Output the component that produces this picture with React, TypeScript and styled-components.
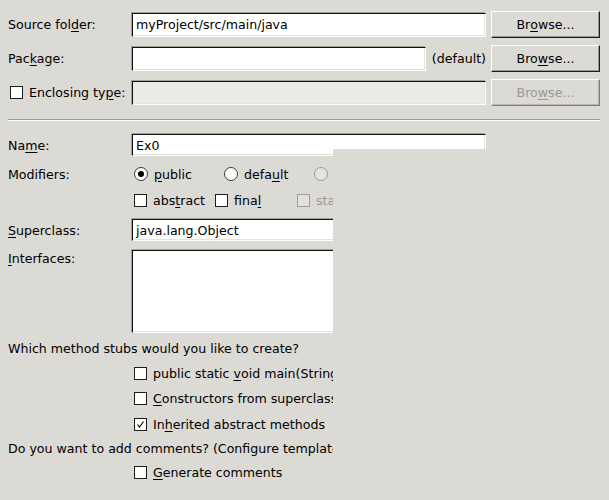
import React from "react";
import styled, { createGlobalStyle, css } from "styled-components";

const Global = createGlobalStyle`
  html, body { margin: 0; padding: 0; background: #dcdad5; }
  body { font-family: "DejaVu Sans", "Liberation Sans", sans-serif; font-size: 12.6px; color: #000; }
`;

const Page = styled.div`
  width: 609px;
  height: 500px;
  box-sizing: border-box;
  padding: 11px 9px 0 8px;
  background: #dcdad5;
  clip-path: polygon(0 0, 609px 0, 609px 149px, 333px 149px, 333px 500px, 0 500px);
`;

const TopGrid = styled.div`
  display: grid;
  grid-template-columns: 119px 354px 109px;
  column-gap: 5px;
  grid-auto-rows: 27px;
  row-gap: 7px;
  align-items: center;
`;

const Label = styled.div<{ $disabled?: boolean }>`
  white-space: nowrap;
  color: ${(p) => (p.$disabled ? "#9a9894" : "#000")};
`;

const Mn = styled.span`
  text-decoration: underline;
  text-underline-offset: 2px;
`;

const Field = styled.div<{ $disabled?: boolean; $h?: number }>`
  box-sizing: border-box;
  height: ${(p) => p.$h ?? 24}px;
  background: ${(p) => (p.$disabled ? "#eceae6" : "#fff")};
  border: 1px solid;
  border-color: #111 #fff #fff #111;
  box-shadow: inset -1px -1px 0 #e4e2de, -1px -1px 0 #a3a19c;
  padding: 0 3px;
  display: flex;
  align-items: center;
  white-space: nowrap;
  overflow: hidden;
  min-width: 0;
`;

const PackageCell = styled.div`
  display: flex;
  align-items: center;
  gap: 6px;
  & > ${Field} { flex: 1; }
`;

const Button = styled.div<{ $disabled?: boolean }>`
  box-sizing: border-box;
  height: 27px;
  display: flex;
  align-items: center;
  justify-content: center;
  background: #dcdad5;
  border: 1px solid;
  border-color: #fff #1c1c1c #1c1c1c #fff;
  box-shadow: inset -1px -1px 0 #9a9893;
  color: ${(p) => (p.$disabled ? "#9a9894" : "#000")};
  ${(p) =>
    p.$disabled &&
    css`
      border-color: #fff #7e7c78 #7e7c78 #fff;
      box-shadow: inset -1px -1px 0 #b8b6b1;
    `}
`;

const Check = styled.span<{ $disabled?: boolean }>`
  box-sizing: border-box;
  width: 13px;
  height: 13px;
  flex: none;
  border: 1px solid ${(p) => (p.$disabled ? "#a09e9a" : "#1e1e1e")};
  background: ${(p) => (p.$disabled ? "#e4e2de" : "#fff")};
  display: inline-flex;
  align-items: center;
  justify-content: center;
`;

const Radio = styled.span<{ $disabled?: boolean; $on?: boolean }>`
  box-sizing: border-box;
  width: 14px;
  height: 14px;
  flex: none;
  border-radius: 50%;
  border: 1px solid ${(p) => (p.$disabled ? "#9c9a96" : "#3a3a3a")};
  background: ${(p) => (p.$disabled ? "#e6e4e0" : "#fff")};
  display: inline-flex;
  align-items: center;
  justify-content: center;
  &::after {
    content: "";
    display: ${(p) => (p.$on ? "block" : "none")};
    width: 6px;
    height: 6px;
    border-radius: 50%;
    background: #000;
  }
`;

const Option = styled.label<{ $w?: number; $disabled?: boolean }>`
  display: inline-flex;
  align-items: center;
  gap: 6px;
  white-space: nowrap;
  width: ${(p) => (p.$w ? `${p.$w}px` : "auto")};
  flex: none;
  color: ${(p) => (p.$disabled ? "#9a9894" : "#000")};
`;

const EnclosingLabel = styled(Option)`
  padding-left: 2px;
`;

const Separator = styled.div`
  margin: 13px 0 13px 0;
  height: 1px;
  background: #9d9b97;
  border-bottom: 1px solid #fff;
`;

const FormRow = styled.div<{ $h: number; $mt?: number; $align?: string }>`
  display: grid;
  grid-template-columns: 124px 1fr;
  height: ${(p) => p.$h}px;
  margin-top: ${(p) => p.$mt ?? 0}px;
  align-items: ${(p) => p.$align ?? "center"};
`;

const NameField = styled(Field)`
  width: 354px;
`;

const WideField = styled(Field)`
  width: 420px;
`;

const Options = styled.div`
  display: flex;
  align-items: center;
  padding-left: 2px;
`;

const TopLabel = styled(Label)`
  padding-top: 1px;
`;

const Line = styled.div<{ $h: number; $mt?: number }>`
  height: ${(p) => p.$h}px;
  margin-top: ${(p) => p.$mt ?? 0}px;
  display: flex;
  align-items: center;
  white-space: nowrap;
`;

const Indented = styled(Line)`
  padding-left: 126px;
`;

const CheckMark = () => (
  <svg width="9" height="9" viewBox="0 0 9 9">
    <path d="M1.5 4.5 L3.5 7 L7.5 1.5" fill="none" stroke="#000" strokeWidth="1.1" />
  </svg>
);

export default function App() {
  return (
    <>
      <Global />
      <Page>
        <TopGrid>
          <Label>
            Source fol<Mn>d</Mn>er:
          </Label>
          <Field>myProject/src/main/java</Field>
          <Button>
            Br<Mn>o</Mn>wse...
          </Button>

          <Label>
            Pac<Mn>k</Mn>age:
          </Label>
          <PackageCell>
            <Field />
            <span>(default)</span>
          </PackageCell>
          <Button>
            Bro<Mn>w</Mn>se...
          </Button>

          <EnclosingLabel>
            <Check />
            <span>
              Enclosing ty<Mn>p</Mn>e:
            </span>
          </EnclosingLabel>
          <Field $disabled />
          <Button $disabled>
            Bro<Mn>w</Mn>se...
          </Button>
        </TopGrid>

        <Separator />

        <FormRow $h={22}>
          <Label>
            Na<Mn>m</Mn>e:
          </Label>
          <NameField $h={22}>Ex0</NameField>
        </FormRow>

        <FormRow $h={20} $mt={8}>
          <Label>Modifiers:</Label>
          <Options>
            <Option $w={90}>
              <Radio $on />
              <span>
                <Mn>p</Mn>ublic
              </span>
            </Option>
            <Option $w={90}>
              <Radio />
              <span>
                defa<Mn>u</Mn>lt
              </span>
            </Option>
            <Option $w={90} $disabled>
              <Radio $disabled />
              <span>
                pri<Mn>v</Mn>ate
              </span>
            </Option>
            <Option $disabled>
              <Radio $disabled />
              <span>protected</span>
            </Option>
          </Options>
        </FormRow>

        <FormRow $h={20} $mt={6}>
          <span />
          <Options>
            <Option $w={81}>
              <Check />
              <span>
                abs<Mn>t</Mn>ract
              </span>
            </Option>
            <Option $w={82}>
              <Check />
              <span>
                fina<Mn>l</Mn>
              </span>
            </Option>
            <Option $disabled>
              <Check $disabled />
              <span>static</span>
            </Option>
          </Options>
        </FormRow>

        <FormRow $h={22} $mt={9}>
          <Label>
            <Mn>S</Mn>uperclass:
          </Label>
          <WideField $h={22}>java.lang.Object</WideField>
        </FormRow>

        <FormRow $h={83} $mt={9} $align="start">
          <TopLabel>
            <Mn>I</Mn>nterfaces:
          </TopLabel>
          <WideField $h={83} />
        </FormRow>

        <Line $h={16} $mt={7}>Which method stubs would you like to create?</Line>

        <Indented $h={20} $mt={7}>
          <Option>
            <Check />
            <span>
              public static <Mn>v</Mn>oid main(String[] args)
            </span>
          </Option>
        </Indented>
        <Indented $h={20} $mt={5}>
          <Option>
            <Check />
            <span>
              <Mn>C</Mn>onstructors from superclass
            </span>
          </Option>
        </Indented>
        <Indented $h={20} $mt={6}>
          <Option>
            <Check>
              <CheckMark />
            </Check>
            <span>
              In<Mn>h</Mn>erited abstract methods
            </span>
          </Option>
        </Indented>

        <Line $h={16} $mt={6}>
          Do you want to add comments? (Configure templates and default value here)
        </Line>

        <Indented $h={20} $mt={6}>
          <Option>
            <Check />
            <span>
              <Mn>G</Mn>enerate comments
            </span>
          </Option>
        </Indented>
      </Page>
    </>
  );
}
